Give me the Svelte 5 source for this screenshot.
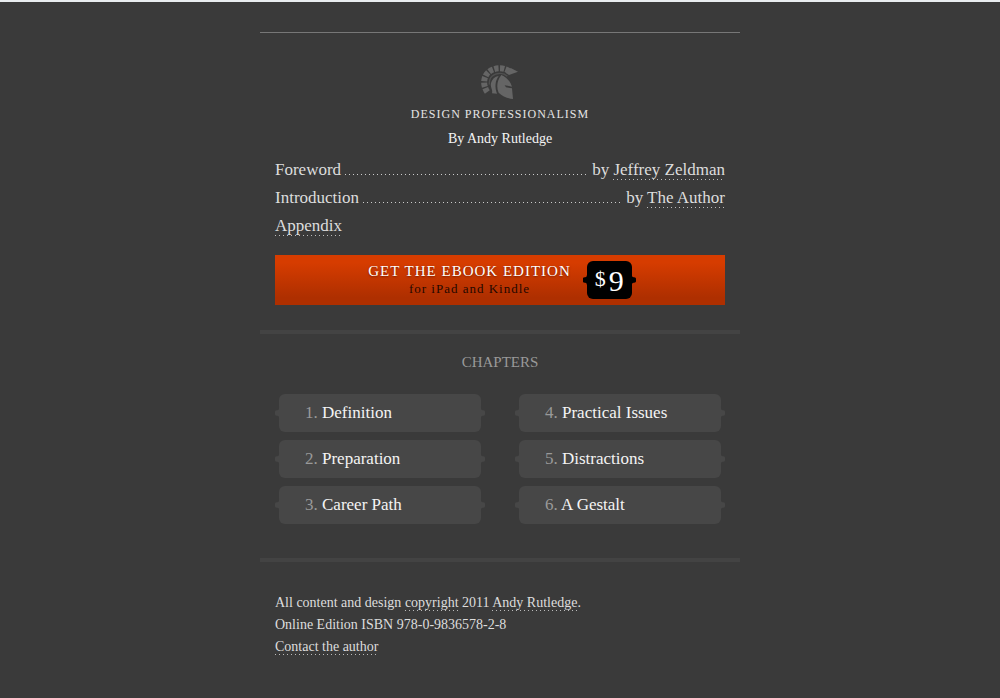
<script>
  const chapters = ['Definition', 'Preparation', 'Career Path', 'Practical Issues', 'Distractions', 'A Gestalt'];
  const parts = [
    { title: 'Foreword', author: 'Jeffrey Zeldman' },
    { title: 'Introduction', author: 'The Author' }
  ];
</script>

<div class="page">
  <header>
    <svg class="logo" viewBox="63 29 114 102" width="38" height="34" aria-hidden="true">
      <path class="crest" d="M82 110 C62 82 73 40 118 39 C130 39 138 41 146 47" />
      <path d="M137 52 L152 38 L174 49 L147 59 Z" />
      <path class="rim" d="M88 88 C86 66 101 53 122 54 C130 54 137 58 142 63" />
      <path d="M116 62 C105 77 104 96 111 115 L96 114 C99 103 90 96 93 83 C96 72 104 64 116 62 Z" />
      <path d="M124 59 C139 65 152 79 156 94 L143 91 L134 90 L138 96 L150 98 L156 99 L159 131 C143 129 127 123 116 112 C108 94 112 74 124 59 Z" />
    </svg>
    <h1>Design Professionalism</h1>
    <p class="byline">By Andy Rutledge</p>
  </header>

  <div class="parts">
    {#each parts as part}
      <div class="part">
        <span>{part.title}</span>
        <span class="leader"></span>
        <span>by <a class="dotted" href="#author">{part.author}</a></span>
      </div>
    {/each}
    <div><a class="dotted" href="#appendix">Appendix</a></div>
  </div>

  <a class="buy" href="#ebook">
    <span class="offer">
      <span class="get">Get the eBook Edition</span>
      <span class="devices">for iPad and Kindle</span>
    </span>
    <span class="tag price"><span class="dollar">$</span>9</span>
  </a>

  <nav>
    <h2>Chapters</h2>
    <ol>
      {#each chapters as chapter, i}
        <li><a class="tag chapter" href={`#chapter-${i + 1}`}><span class="number">{i + 1}.</span> {chapter}</a></li>
      {/each}
    </ol>
  </nav>

  <footer>
    <p>All content and design <a class="dotted" href="#copyright">copyright</a> 2011 <a class="dotted" href="#andy">Andy Rutledge</a>.</p>
    <p>Online Edition ISBN 978-0-9836578-2-8</p>
    <p><a class="dotted" href="#contact">Contact the author</a></p>
  </footer>
</div>

<style>
  :global(body) {
    background: #3a3a3a;
    border-top: 2px solid #e9edef;
  }
  .page {
    box-sizing: border-box;
    max-width: 480px;
    margin: 0 auto;
    padding: 30px 0 40px;
    font-family: "Liberation Serif", serif;
    font-size: 17px;
    line-height: 28px;
    color: #ddd;
  }
  h1, h2, p, ol {
    margin: 0;
    padding: 0;
    font-weight: normal;
  }
  a {
    color: inherit;
    text-decoration: none;
  }
  header {
    border-top: 1px solid #777;
    padding-top: 32px;
    text-align: center;
  }
  .logo {
    display: block;
    margin: 0 auto;
    fill: #656565;
  }
  .crest {
    fill: none;
    stroke: #656565;
    stroke-width: 18;
    stroke-dasharray: 13 4;
  }
  .rim {
    fill: none;
    stroke: #505050;
    stroke-width: 4;
  }
  h1 {
    font-size: 12px;
    line-height: 30px;
    letter-spacing: 1px;
    text-transform: uppercase;
    color: #e4e4e4;
  }
  .byline {
    font-size: 14px;
    line-height: 20px;
    color: #f4f4f4;
  }
  .parts {
    padding: 7px 15px 15px;
  }
  .part {
    display: flex;
    gap: 4px;
  }
  .leader {
    flex: 1;
    height: 1px;
    margin-top: 18px;
    background: repeating-linear-gradient(90deg, #ccc 0 1px, transparent 1px 4px);
  }
  .dotted {
    padding-bottom: 1px;
    background: repeating-linear-gradient(90deg, #bbb 0 1px, transparent 1px 4px) left bottom / 100% 1px no-repeat;
  }
  .buy {
    display: flex;
    justify-content: center;
    align-items: center;
    gap: 16px;
    height: 50px;
    margin: 0 15px 25px;
    background: linear-gradient(#d63c00 15%, #ae2f00 85%);
  }
  .offer {
    display: grid;
    text-align: center;
    line-height: 18px;
    letter-spacing: 1px;
  }
  .get {
    font-size: 15px;
    text-transform: uppercase;
    color: #fff;
    text-shadow: 0 1px 2px #7a2000;
  }
  .devices {
    font-size: 13px;
    color: #240800;
  }
  .tag {
    --tag: #474747;
    position: relative;
    border-radius: 6px;
    background: var(--tag);
  }
  .tag::before, .tag::after {
    content: "";
    position: absolute;
    top: 12px;
    left: -4px;
    width: 5px;
    height: 14px;
    background: var(--tag);
    clip-path: polygon(100% 0, 70% 28%, 15% 32%, 0 40%, 0 60%, 15% 68%, 70% 72%, 100% 100%);
  }
  .tag::after {
    left: auto;
    right: -4px;
    transform: scaleX(-1);
  }
  .price {
    --tag: #000;
    display: flex;
    justify-content: center;
    gap: 3px;
    width: 45px;
    height: 38px;
    font-size: 30px;
    line-height: 40px;
    color: #fff;
  }
  .dollar {
    font-size: 22px;
    line-height: 36px;
  }
  nav {
    border: solid #434343;
    border-width: 4px 0;
    padding: 14px 19px 34px;
  }
  h2 {
    font-size: 15px;
    line-height: 28px;
    margin-bottom: 18px;
    text-align: center;
    text-transform: uppercase;
    color: #999;
  }
  ol {
    display: grid;
    grid-template-rows: repeat(3, 38px);
    grid-auto-flow: column;
    grid-auto-columns: 1fr;
    gap: 8px 38px;
    list-style: none;
  }
  .chapter {
    display: block;
    padding-left: 26px;
    line-height: 38px;
    color: #f4f4f4;
  }
  .number {
    color: #999;
  }
  footer {
    padding: 30px 15px 0;
    font-size: 14px;
    line-height: 22px;
  }
</style>
